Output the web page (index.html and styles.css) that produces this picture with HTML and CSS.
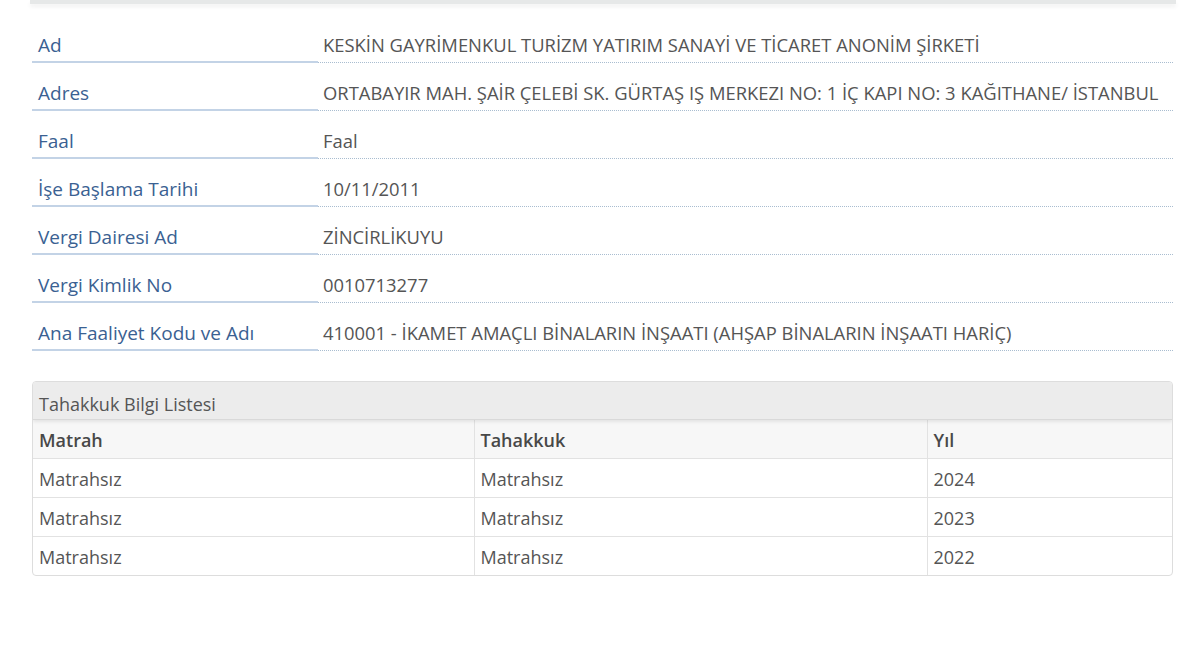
FILE: index.html
```html
<!DOCTYPE html>
<html lang="tr">
<head>
<meta charset="utf-8">
<link rel="stylesheet" href="styles.css">
</head>
<body>
<div class="topbar"></div>
<div class="page">
  <div class="info">
    <div class="row"><div class="label">Ad</div><div class="value">KESKİN GAYRİMENKUL TURİZM YATIRIM SANAYİ VE TİCARET ANONİM ŞİRKETİ</div></div>
    <div class="row"><div class="label">Adres</div><div class="value">ORTABAYIR MAH. ŞAİR ÇELEBİ SK. GÜRTAŞ IŞ MERKEZI NO: 1 İÇ KAPI NO: 3 KAĞITHANE/ İSTANBUL</div></div>
    <div class="row"><div class="label">Faal</div><div class="value">Faal</div></div>
    <div class="row"><div class="label">İşe Başlama Tarihi</div><div class="value">10/11/2011</div></div>
    <div class="row"><div class="label">Vergi Dairesi Ad</div><div class="value">ZİNCİRLİKUYU</div></div>
    <div class="row"><div class="label">Vergi Kimlik No</div><div class="value">0010713277</div></div>
    <div class="row"><div class="label">Ana Faaliyet Kodu ve Adı</div><div class="value">410001 - İKAMET AMAÇLI BİNALARIN İNŞAATI (AHŞAP BİNALARIN İNŞAATI HARİÇ)</div></div>
  </div>

  <div class="panel">
    <div class="panel-heading">Tahakkuk Bilgi Listesi</div>
    <table class="list">
      <colgroup><col class="c1"><col class="c2"><col class="c3"></colgroup>
      <thead>
        <tr><th>Matrah</th><th>Tahakkuk</th><th>Yıl</th></tr>
      </thead>
      <tbody>
        <tr><td>Matrahsız</td><td>Matrahsız</td><td>2024</td></tr>
        <tr><td>Matrahsız</td><td>Matrahsız</td><td>2023</td></tr>
        <tr><td>Matrahsız</td><td>Matrahsız</td><td>2022</td></tr>
      </tbody>
    </table>
  </div>
</div>
</body>
</html>
```

FILE: styles.css
```css
html, body {
  margin: 0;
  padding: 0;
  background: #ffffff;
}
body {
  font-family: "Open Sans", "Noto Sans", sans-serif;
  font-size: 18px;
  color: #555555;
}
.topbar {
  height: 4px;
  margin: 0 24px 0 30px;
  background: #e6e8e8;
  box-shadow: 0 3px 4px rgba(0,0,0,0.06);
}
.page {
  padding: 11px 27px 0 32px;
}
.info {
  display: flex;
  flex-direction: column;
}
.row {
  display: flex;
  height: 48px;
}
.label {
  width: 286px;
  flex: none;
  box-sizing: border-box;
  padding: 18px 0 0 6px;
  line-height: 24px;
  font-size: 19px;
  color: #3a6192;
  border-bottom: 2px solid #c3d3e6;
}
.value {
  flex: 1;
  box-sizing: border-box;
  padding: 18px 0 0 5px;
  line-height: 24px;
  font-size: 18.4px;
  color: #555555;
  border-bottom: 1px dotted #a9bdd0;
  white-space: nowrap;
}
.panel {
  margin-top: 30px;
  border: 1px solid #dddddd;
  border-radius: 4px;
  overflow: hidden;
}
.panel-heading {
  height: 38px;
  box-sizing: border-box;
  padding: 10px 6px 0;
  line-height: 24px;
  background: #ececec;
  color: #555555;
  border-bottom: 1px solid #d9d9d9;
  box-shadow: 0 2px 3px rgba(0,0,0,0.08);
  position: relative;
}
.list {
  width: 100%;
  border-collapse: collapse;
  table-layout: fixed;
}
.c1 { width: 441px; }
.c2 { width: 453px; }
.c3 { width: auto; }
.list th, .list td {
  height: 36px;
  padding: 2px 6px 0;
  text-align: left;
  line-height: 24px;
  border-left: 1px solid #e2e2e2;
  border-top: 1px solid #e2e2e2;
}
.list th:first-child, .list td:first-child { border-left: none; }
.list thead tr th { border-top: none; }
.list th {
  background: #f7f7f7;
  font-weight: 600;
  color: #484848;
}
.list td {
  color: #555555;
}
```
